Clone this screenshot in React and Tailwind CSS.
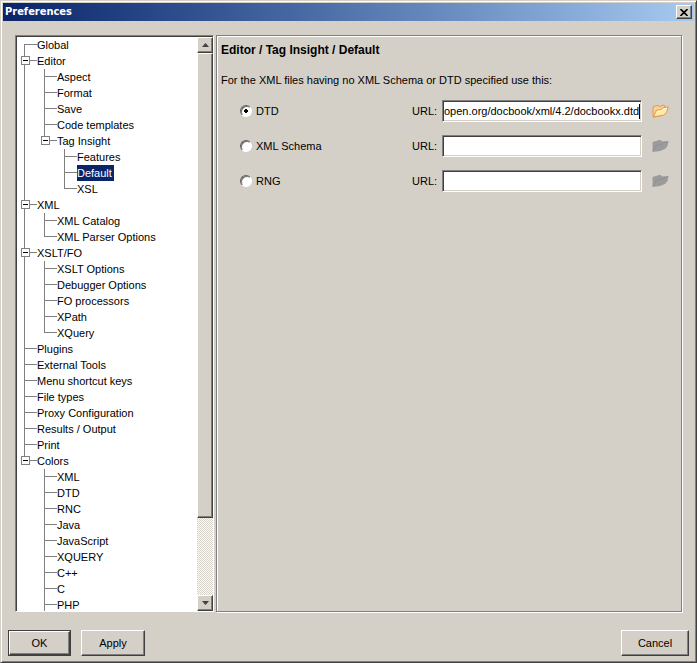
import { useState } from 'react';

const TREE = [
  { label: 'Global' },
  {
    label: 'Editor',
    children: [
      { label: 'Aspect' },
      { label: 'Format' },
      { label: 'Save' },
      { label: 'Code templates' },
      {
        label: 'Tag Insight',
        children: [{ label: 'Features' }, { label: 'Default' }, { label: 'XSL' }],
      },
    ],
  },
  { label: 'XML', children: [{ label: 'XML Catalog' }, { label: 'XML Parser Options' }] },
  {
    label: 'XSLT/FO',
    children: [
      { label: 'XSLT Options' },
      { label: 'Debugger Options' },
      { label: 'FO processors' },
      { label: 'XPath' },
      { label: 'XQuery' },
    ],
  },
  { label: 'Plugins' },
  { label: 'External Tools' },
  { label: 'Menu shortcut keys' },
  { label: 'File types' },
  { label: 'Proxy Configuration' },
  { label: 'Results / Output' },
  { label: 'Print' },
  {
    label: 'Colors',
    continues: true,
    children: [
      { label: 'XML' },
      { label: 'DTD' },
      { label: 'RNC' },
      { label: 'Java' },
      { label: 'JavaScript' },
      { label: 'XQUERY' },
      { label: 'C++' },
      { label: 'C' },
      { label: 'PHP' },
    ],
  },
];

const RAISED =
  'border border-t-white border-l-white border-r-[#404040] border-b-[#404040] shadow-[inset_-1px_-1px_0_#808080] bg-[#d4d0c8]';
const SUNKEN =
  'border border-t-[#808080] border-l-[#808080] border-r-white border-b-white';

// Guide lines in front of a row: `up` and `down` are the halves of the vertical line.
function Guide({ up, down, across, box }) {
  return (
    <svg width="20" height="16" className="block shrink-0" shapeRendering="crispEdges" aria-hidden="true">
      {up && <rect x="7" y="0" width="1" height="8" fill="#808080" />}
      {down && <rect x="7" y="7" width="1" height="9" fill="#808080" />}
      {across && <rect x="7" y="7" width="13" height="1" fill="#808080" />}
      {box && (
        <>
          <rect x="4" y="3" width="9" height="9" fill="#808080" />
          <rect x="5" y="4" width="7" height="7" fill="#fff" />
          <rect x="6" y="7" width="5" height="1" fill="#000" />
          {box === 'plus' && <rect x="8" y="5" width="1" height="5" fill="#000" />}
        </>
      )}
    </svg>
  );
}

function TreeItem({ node, path, trail, first, last, selected, onSelect }) {
  const [open, setOpen] = useState(true);
  const id = path + '/' + node.label;
  const active = selected === id;
  const guide = { up: !first, down: !last, across: true };
  return (
    <li>
      <div className="flex h-4">
        {trail.map((line, i) => (
          <Guide key={i} up={line} down={line} />
        ))}
        {node.children ? (
          <button type="button" aria-label={'Toggle ' + node.label} aria-expanded={open} onClick={() => setOpen(!open)}>
            <Guide {...guide} box={open ? 'minus' : 'plus'} />
          </button>
        ) : (
          <Guide {...guide} />
        )}
        <button
          type="button"
          onClick={() => onSelect(id)}
          className={'h-4 whitespace-nowrap leading-4 ' + (active ? 'bg-[#0a246a] pr-0.5 text-white' : '')}
        >
          {node.label}
        </button>
      </div>
      {node.children && open && (
        <ul>
          {node.children.map((child, i) => (
            <TreeItem
              key={child.label}
              node={child}
              path={id}
              trail={[...trail, !last]}
              first={false}
              last={i === node.children.length - 1 && !node.continues}
              selected={selected}
              onSelect={onSelect}
            />
          ))}
        </ul>
      )}
    </li>
  );
}

function ScrollBar() {
  return (
    <div className="flex w-4 shrink-0 flex-col bg-[#d4d0c8] bg-[repeating-conic-gradient(#ffffff_0_25%,#d4d0c8_0_50%)] bg-size-[2px_2px]">
      <button type="button" aria-label="Scroll up" className={'flex h-4 w-4 shrink-0 items-center justify-center ' + RAISED}>
        <svg width="7" height="4" viewBox="0 0 7 4" aria-hidden="true">
          <path d="M3.5 0L7 4H0z" fill="#404040" />
        </svg>
      </button>
      <div className="flex min-h-0 flex-1 flex-col">
        <div className={'h-6/7 ' + RAISED} />
      </div>
      <button type="button" aria-label="Scroll down" className={'flex h-4 w-4 shrink-0 items-center justify-center ' + RAISED}>
        <svg width="7" height="4" viewBox="0 0 7 4" aria-hidden="true">
          <path d="M0 0H7L3.5 4z" fill="#404040" />
        </svg>
      </button>
    </div>
  );
}

function FolderIcon({ enabled }) {
  if (!enabled) {
    return (
      <svg width="17" height="14" viewBox="0 0 17 14" aria-hidden="true">
        <path d="M0.5 3L3 2.2L8 0.8L10.5 2.6L16.5 2L15.5 7L13 10L8 12L0.5 13z" fill="#9b9b9b" />
        <path d="M1 12.5L4 6.5L9 5.5L11 3.8L16 3" fill="none" stroke="#8c8c8c" strokeWidth="0.7" />
      </svg>
    );
  }
  return (
    <svg width="17" height="14" viewBox="0 0 17 14" aria-hidden="true">
      <path d="M1 12.5V3L2.5 2.2L6 1.4L7.5 2.6L12 1L13 2.4V7L9 11.5L2 13z" fill="#fbd098" stroke="#dc8a44" strokeWidth="0.8" />
      <path d="M1.4 12.9L4.4 6.4L9.4 5.6L11 3.8L16.2 2.8L14.6 8.6L11.4 11.2z" fill="#ffe9a6" stroke="#dc8a2c" strokeWidth="0.8" />
      <path d="M5 7.6L9.8 6.7L11.4 5L14.9 4.3" fill="none" stroke="#fffbe6" />
    </svg>
  );
}

function SourceRow({ id, label, checked, onCheck, value, onChange }) {
  return (
    <div className="flex h-[22px] items-center">
      <input
        type="radio"
        name="source"
        id={'source-' + id}
        checked={checked}
        onChange={onCheck}
        className="size-3 appearance-none rounded-full border border-t-[#606060] border-l-[#606060] border-r-white border-b-white bg-white shadow-[inset_1px_1px_0_#707070] checked:bg-[radial-gradient(circle,#000_0_2px,#fff_2px)]"
      />
      <label htmlFor={'source-' + id} className="min-w-0 flex-1 pl-1">
        {label}
      </label>
      <label htmlFor={'url-' + id} className="w-[30px] shrink-0">
        URL:
      </label>
      <div className="flex h-[22px] w-[200px] shrink-0 items-center border border-t-[#808080] border-l-[#808080] border-r-white border-b-white bg-white px-px shadow-[inset_1px_1px_0_#404040,inset_-1px_-1px_0_#d4d0c8]">
        <input
          type="text"
          id={'url-' + id}
          value={value}
          onChange={(e) => onChange(e.target.value)}
          disabled={!checked}
          className="h-4 min-w-0 flex-1 bg-transparent outline-none"
        />
        {checked && <span className="h-[15px] w-px bg-black" />}
      </div>
      <button type="button" aria-label={'Browse ' + label} disabled={!checked} className="ml-2.5 shrink-0">
        <FolderIcon enabled={checked} />
      </button>
    </div>
  );
}

export default function App() {
  const [selected, setSelected] = useState('/Editor/Tag Insight/Default');
  const [source, setSource] = useState('dtd');
  const [urls, setUrls] = useState({
    dtd: 'open.org/docbook/xml/4.2/docbookx.dtd',
    schema: '',
    rng: '',
  });
  const rows = [
    ['dtd', 'DTD'],
    ['schema', 'XML Schema'],
    ['rng', 'RNG'],
  ];
  return (
    <div className="flex h-screen flex-col border border-t-[#d4d0c8] border-l-[#d4d0c8] border-r-[#404040] border-b-[#404040] bg-[#d4d0c8] p-0.5 font-['Liberation_Sans',Arial,sans-serif] text-[11px] leading-4 text-black shadow-[inset_1px_1px_0_#fff,inset_-1px_-1px_0_#808080]">
      <header className="flex h-[18px] shrink-0 items-center justify-between bg-linear-to-r from-[#0a246a] to-[#a6caf0] pr-0.5 pl-0.5">
        <h1 className="font-['DejaVu_Sans_Condensed','DejaVu_Sans',sans-serif] text-[11px] font-bold text-white">Preferences</h1>
        <button type="button" aria-label="Close" className={'flex h-3.5 w-4 items-center justify-center ' + RAISED}>
          <svg width="8" height="7" viewBox="0 0 8 7" aria-hidden="true">
            <path d="M0.5 0L7.5 7M7.5 0L0.5 7" stroke="#000" strokeWidth="1.6" />
          </svg>
        </button>
      </header>

      <main className="flex min-h-0 flex-1 gap-0.5 px-3 pt-3.5">
        <nav
          aria-label="Preference pages"
          className={'flex w-[199px] shrink-0 bg-white pt-px pl-px shadow-[inset_1px_1px_0_#404040] ' + SUNKEN}
        >
          <ul className="min-w-0 flex-1 overflow-hidden">
            {TREE.map((node, i) => (
              <TreeItem
                key={node.label}
                node={node}
                path=""
                trail={[]}
                first={i === 0}
                last={i === TREE.length - 1}
                selected={selected}
                onSelect={setSelected}
              />
            ))}
          </ul>
          <ScrollBar />
        </nav>

        <section className="min-w-0 flex-1 border border-[#808080] pt-1.5 pr-3 pl-1 shadow-[inset_1px_1px_0_#fff,1px_1px_0_#fff]">
          <h2 className="text-[12px] font-bold">Editor / Tag Insight / Default</h2>
          <p className="mt-3.5">For the XML files having no XML Schema or DTD specified use this:</p>
          <div className="mt-3 flex flex-col gap-[13px] pl-[19px]">
            {rows.map(([id, label]) => (
              <SourceRow
                key={id}
                id={id}
                label={label}
                checked={source === id}
                onCheck={() => setSource(id)}
                value={urls[id]}
                onChange={(v) => setUrls({ ...urls, [id]: v })}
              />
            ))}
          </div>
        </section>
      </main>

      <footer className="flex shrink-0 gap-2.5 px-[5px] pt-[18px] pb-1">
        <button type="button" className="border border-[#404040]">
          <span className={'flex h-6 w-[61px] items-center justify-center ' + RAISED}>OK</span>
        </button>
        <button type="button" className={'h-[26px] w-16 ' + RAISED}>
          Apply
        </button>
        <button type="button" className={'ml-auto h-[26px] w-[68px] ' + RAISED}>
          Cancel
        </button>
      </footer>
    </div>
  );
}
